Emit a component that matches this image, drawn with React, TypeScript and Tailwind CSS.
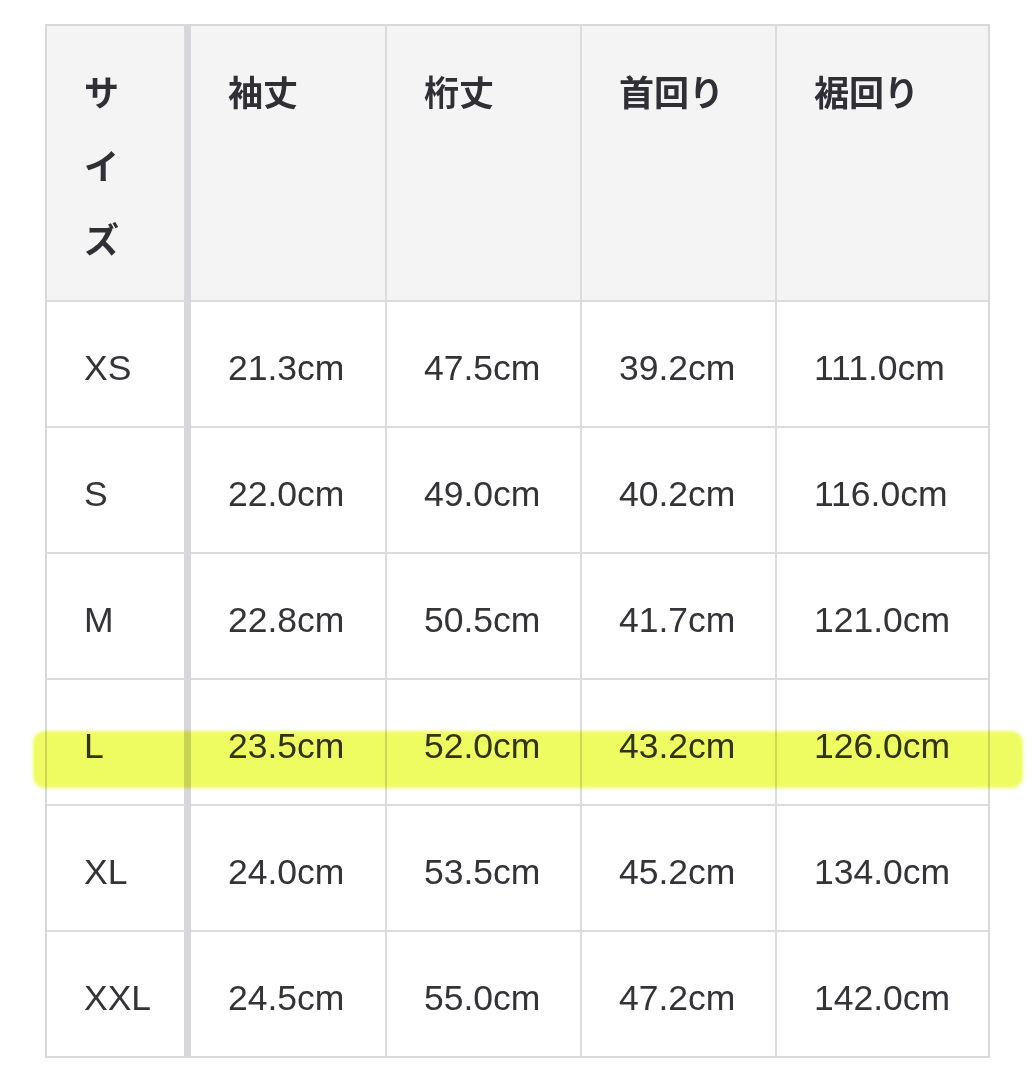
const HEADERS = ['サイズ', '袖丈', '桁丈', '首回り', '裾回り'] as const;

const ROWS = [
  ['XS', '21.3cm', '47.5cm', '39.2cm', '111.0cm'],
  ['S', '22.0cm', '49.0cm', '40.2cm', '116.0cm'],
  ['M', '22.8cm', '50.5cm', '41.7cm', '121.0cm'],
  ['L', '23.5cm', '52.0cm', '43.2cm', '126.0cm'],
  ['XL', '24.0cm', '53.5cm', '45.2cm', '134.0cm'],
  ['XXL', '24.5cm', '55.0cm', '47.2cm', '142.0cm'],
] as const;

const colBorder = (i: number) =>
  i === 0
    ? 'border-r-[7px] border-r-[#d6d6db]'
    : i < 4
      ? 'border-r-2 border-r-[#dcdcdc]'
      : '';

export default function App() {
  return (
    <div className="relative min-h-[1080px] w-[1032px] bg-white pt-6 pl-[45px]">
      <div className="grid w-[945px] grid-cols-[144px_196px_195px_195px_211px] grid-rows-[276px_repeat(5,126px)_124px] border-2 border-[#d9d9d9] font-['Liberation_Sans','Noto_Sans_CJK_JP',sans-serif] text-[#333338]">
        {HEADERS.map((h, i) => (
          <div
            key={h}
            className={`border-b-2 border-b-[#dcdcdc] bg-[#f4f4f5] px-[37px] pt-[28px] font-['Noto_Sans_CJK_JP',sans-serif] text-[35px] leading-[73.5px] font-bold text-[#2f2f35] ${colBorder(i)}`}>
            {h}
          </div>
        ))}
        {ROWS.map((row, r) =>
          row.map((cell, i) => (
            <div
              key={`${r}-${i}`}
              className={`flex items-center px-[37px] pt-[9px] text-[35.5px] leading-none ${colBorder(i)} ${r < ROWS.length - 1 ? 'border-b-2 border-b-[#dcdcdc]' : ''}`}>
              {cell}
            </div>
          )),
        )}
      </div>

      {/* marker highlight over the L row */}
      <div
        aria-hidden
        className="pointer-events-none absolute top-[731px] left-[33px] h-[57px] w-[990px] rounded-[12px] bg-[#eefc62] mix-blend-multiply blur-[1.5px]"
      />
    </div>
  );
}
